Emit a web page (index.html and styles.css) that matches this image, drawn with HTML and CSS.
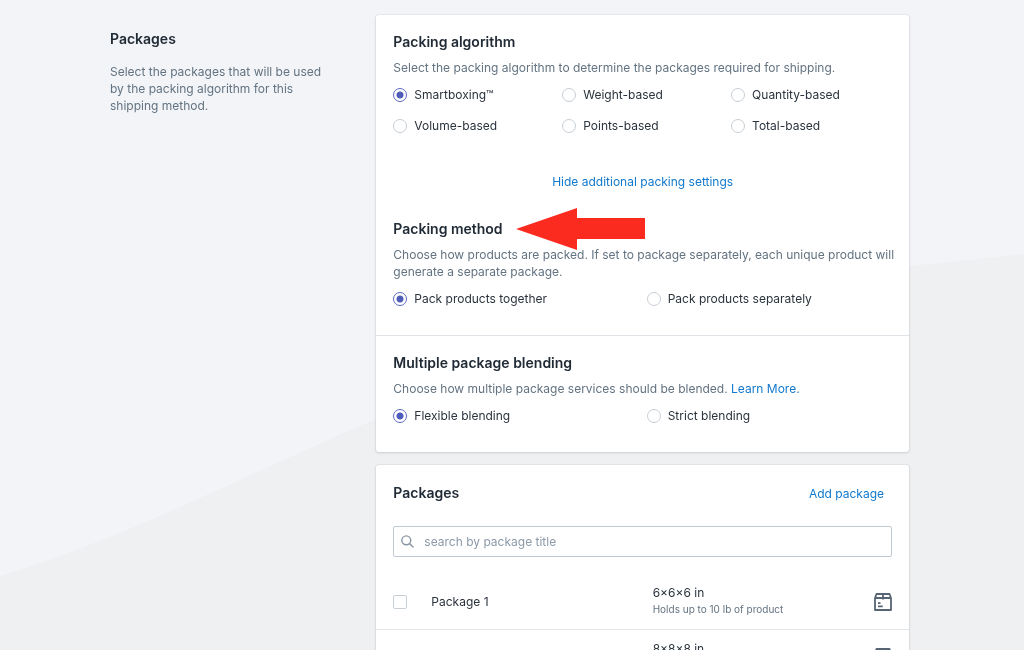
FILE: index.html
```html
<!DOCTYPE html>
<html lang="en">
<head>
<meta charset="utf-8">
<meta name="viewport" content="width=device-width, initial-scale=1">
<title>Packages</title>
<link rel="stylesheet" href="styles.css">
</head>
<body>
<svg class="backdrop" viewBox="0 0 1024 650" preserveAspectRatio="none" aria-hidden="true">
  <path d="M0 576C130 537 240 477 367 423C560 342 740 285 910 266L1024 254V650H0Z" fill="#eef0f2"/>
</svg>
<main class="page">
  <header class="intro">
    <h1 class="heading">Packages</h1>
    <p class="text">Select the packages that will be used by the packing algorithm for this shipping method.</p>
  </header>
  <div class="cards">
    <div class="card">
      <section class="section">
        <h2 class="heading">Packing algorithm</h2>
        <p class="text">Select the packing algorithm to determine the packages required for shipping.</p>
        <div class="options options-three">
          <label class="option"><input class="radio" type="radio" name="algorithm" checked>Smartboxing™</label>
          <label class="option"><input class="radio" type="radio" name="algorithm">Weight-based</label>
          <label class="option"><input class="radio" type="radio" name="algorithm">Quantity-based</label>
          <label class="option"><input class="radio" type="radio" name="algorithm">Volume-based</label>
          <label class="option"><input class="radio" type="radio" name="algorithm">Points-based</label>
          <label class="option"><input class="radio" type="radio" name="algorithm">Total-based</label>
        </div>
        <button class="link toggle" type="button">Hide additional packing settings</button>
        <div class="callout">
          <h2 class="heading">Packing method</h2>
          <svg class="arrow" width="129" height="42" viewBox="0 0 129 42" aria-hidden="true"><path d="M0 21L61 0V10H129V31H61V42Z" fill="#fc2b1f"/></svg>
        </div>
        <p class="text text-wide">Choose how products are packed. If set to package separately, each unique product will generate a separate package.</p>
        <div class="options">
          <label class="option"><input class="radio" type="radio" name="method" checked>Pack products together</label>
          <label class="option"><input class="radio" type="radio" name="method">Pack products separately</label>
        </div>
      </section>
      <section class="section">
        <h2 class="heading">Multiple package blending</h2>
        <p class="text">Choose how multiple package services should be blended. <a class="link" href="#">Learn More.</a></p>
        <div class="options">
          <label class="option"><input class="radio" type="radio" name="blending" checked>Flexible blending</label>
          <label class="option"><input class="radio" type="radio" name="blending">Strict blending</label>
        </div>
      </section>
    </div>
    <section class="card">
      <div class="card-head">
        <h2 class="heading">Packages</h2>
        <button class="link" type="button">Add package</button>
      </div>
      <div class="search">
        <svg class="search-icon" width="13" height="13" viewBox="0 0 14 14" fill="none" stroke="#8795a3" stroke-width="1.5" stroke-linecap="round" aria-hidden="true"><circle cx="5.7" cy="5.7" r="4.8"/><path d="M9.3 9.3L13 13"/></svg>
        <input class="search-input" type="text" placeholder="search by package title" aria-label="search by package title">
      </div>
      <ul class="packages">
        <li class="package">
          <input class="checkbox" type="checkbox" id="package-1">
          <label class="name" for="package-1">Package 1</label>
          <div class="dimensions"><div class="size">6×6×6 in</div><div class="capacity">Holds up to 10 lb of product</div></div>
          <svg width="18" height="18" viewBox="0 0 18 18" fill="none" stroke="#576474" stroke-width="1.8" stroke-linejoin="round" aria-hidden="true"><path d="M2.5 1H15.5L17 5V17H1V5ZM1 5H17M9 1V6.5M4 10.2H6.5M4 13.4H8.7"/></svg>
        </li>
        <li class="package">
          <input class="checkbox" type="checkbox" aria-label="8×8×8 in">
          <span class="name"></span>
          <div class="dimensions"><div class="size">8×8×8 in</div></div>
          <svg width="18" height="18" viewBox="0 0 18 18" fill="none" stroke="#576474" stroke-width="1.8" stroke-linejoin="round" aria-hidden="true"><path d="M2.5 1H15.5L17 5V17H1V5ZM1 5H17M9 1V6.5M4 10.2H6.5M4 13.4H8.7"/></svg>
        </li>
      </ul>
    </section>
  </div>
</main>
</body>
</html>
```
FILE: styles.css
```css
* { box-sizing: border-box; }

body {
  margin: 0;
  background: #f2f4f8;
  color: #2b333d;
  font: 12px/17px Inter, "Liberation Sans", sans-serif;
}

.backdrop {
  position: fixed;
  inset: 0;
  z-index: -1;
  width: 100%;
  height: 100%;
}

.page {
  display: grid;
  grid-template-columns: 1fr 2fr;
  padding: 15px 115px 0 110px;
}

.intro { padding: 14px 44px 0 0; }
.intro .text { margin-top: 14px; }

.heading {
  margin: 0;
  font-size: 14px;
  line-height: 20px;
  font-weight: 600;
  color: #212b36;
}

.text {
  margin: 7px 0 0;
  color: #637381;
}

.text-wide { margin-right: -8px; }

.cards {
  display: grid;
  gap: 13px;
  min-width: 0;
}

.card {
  background: #fff;
  border-radius: 3px;
  box-shadow: 0 0 0 1px rgba(63, 63, 68, 0.05), 0 1px 3px rgba(63, 63, 68, 0.15);
}

.section { padding: 17px 17px 21px; }
.section + .section { border-top: 1px solid #dfe3e8; }

.options {
  display: grid;
  grid-template-columns: repeat(2, 1fr);
  column-gap: 8px;
  margin-top: 3px;
}

.options-three { grid-template-columns: repeat(3, 1fr); }

.option {
  display: flex;
  align-items: center;
  gap: 7px;
  height: 31px;
}

.radio,
.checkbox {
  appearance: none;
  flex: none;
  width: 14px;
  height: 14px;
  margin: 0;
  border: 1px solid #c8ced6;
  background: #fff;
}

.radio { border-radius: 50%; }
.checkbox { border-radius: 2px; }

.radio:checked {
  border-color: #5c6ac4;
  background: radial-gradient(circle, #4f5db8 3px, #fff 4px);
}

.link {
  padding: 0;
  border: 0;
  background: none;
  color: #1279cc;
  font: inherit;
  text-decoration: none;
  cursor: pointer;
}

.toggle {
  display: block;
  margin: 31px auto 27px;
  line-height: 20px;
}

.callout { position: relative; }

.arrow {
  position: absolute;
  left: 123px;
  top: -11px;
}

.card-head {
  display: flex;
  align-items: center;
  justify-content: space-between;
  padding: 18px 25px 0 17px;
}

.search {
  display: flex;
  align-items: center;
  gap: 10px;
  height: 31px;
  margin: 23px 17px 17px;
  padding: 0 7px;
  border: 1px solid #c0c8d1;
  border-radius: 2px;
}

.search-input {
  flex: 1;
  min-width: 0;
  padding: 0;
  border: 0;
  outline: 0;
  background: none;
  color: inherit;
  font: inherit;
}

.search-input::placeholder { color: #8c9aa8; opacity: 1; }

.packages {
  margin: 0;
  padding: 0;
  list-style: none;
}

.package {
  display: grid;
  grid-template-columns: 14px 1fr 1fr 18px;
  align-items: center;
  min-height: 55px;
  padding: 0 17px;
}

.package + .package { border-top: 1px solid #e3e6ea; }

.name { padding-left: 24px; }

.dimensions {
  align-self: start;
  padding: 10px 0 0 12px;
}

.capacity {
  font-size: 10px;
  color: #637381;
}
```
